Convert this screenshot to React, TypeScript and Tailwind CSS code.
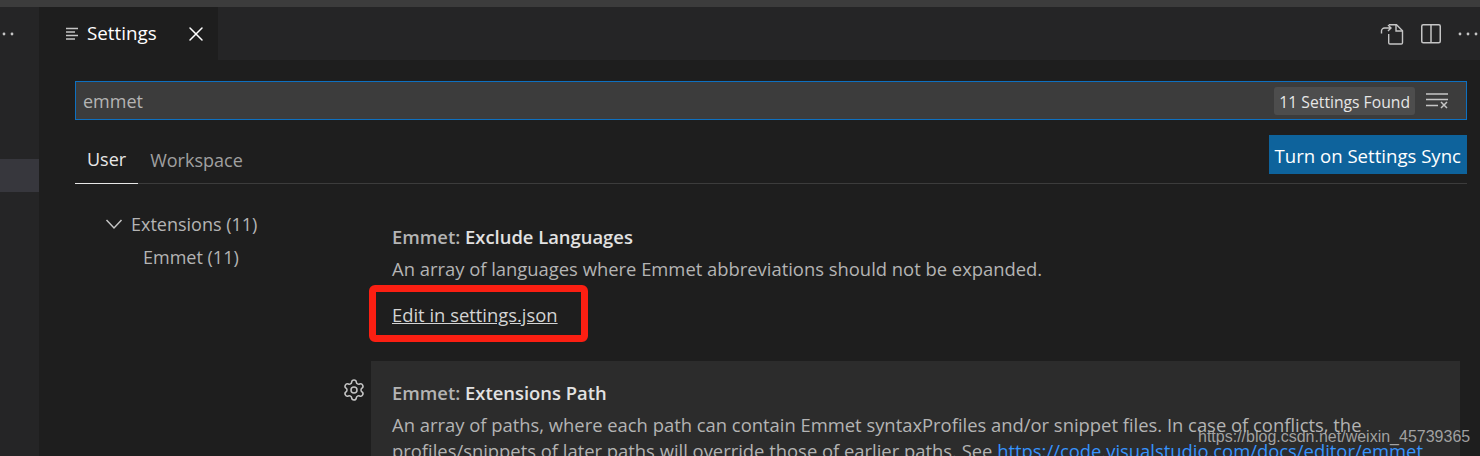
import { Settings, X } from "lucide-react";

function Dots() {
  return (
    <svg width="20" height="16" viewBox="0 0 20 16" fill="#c5c5c5">
      <circle cx="2" cy="8" r="1.4" />
      <circle cx="10" cy="8" r="1.4" />
      <circle cx="18" cy="8" r="1.4" />
    </svg>
  );
}

function PreviewIcon() {
  return (
    <svg width="24" height="24" viewBox="0 0 24 24" fill="none" stroke="#c5c5c5" strokeWidth="1.4">
      <path d="M9 2.7h7.5l6 6v12a1.3 1.3 0 0 1-1.3 1.3H10a1.3 1.3 0 0 1-1.3-1.3V12" />
      <path d="M16 2.7V9h6.5" />
      <path d="M1.5 11.5V9a3 3 0 0 1 3-3h6.5M8 3l3 3-3 3" />
    </svg>
  );
}

function SplitIcon() {
  return (
    <svg width="20" height="20" viewBox="0 0 20 20" fill="none" stroke="#c5c5c5" strokeWidth="1.5">
      <rect x="0.75" y="0.75" width="18.5" height="18" rx="1.5" />
      <path d="M10 1v18" />
    </svg>
  );
}

function ClearIcon() {
  return (
    <svg width="22" height="16" viewBox="0 0 22 16" fill="none" stroke="#c5c5c5" strokeWidth="1.5">
      <path d="M0 1h22M0 6.5h22M0 12.5h12" />
      <path d="M15 9l6 6M21 9l-6 6" />
    </svg>
  );
}

function TabListIcon() {
  return (
    <svg width="14" height="14" viewBox="0 0 14 14" fill="none" stroke="#c5c5c5" strokeWidth="1.4">
      <path d="M1 1.5h12M1 5h9M1 8.5h12M1 12h9" />
    </svg>
  );
}

function Chevron() {
  return (
    <svg width="18" height="12" viewBox="0 0 18 12" fill="none" stroke="#c5c5c5" strokeWidth="1.5">
      <path d="M1.5 2l7.5 8 7.5-8" />
    </svg>
  );
}

export default function App() {
  return (
    <div
      className="relative flex h-[456px] w-[1480px] flex-col overflow-hidden bg-[#1e1e1e] text-[#cccccc]"
      style={{ fontFamily: '"Open Sans", "Noto Sans", sans-serif' }}
    >
      {/* title bar */}
      <div className="h-[7px] shrink-0 bg-[#3c3c3c]" />

      <div className="flex min-h-0 flex-1">
        {/* side bar */}
        <div className="w-[39px] shrink-0 overflow-hidden bg-[#252526]">
          <div className="flex h-[53px] items-center">
            <div className="-ml-[6px] flex h-4 items-center">
              <Dots />
            </div>
          </div>
          <div className="mt-[99px] h-[33px] bg-[#37373d]" />
        </div>

        {/* editor */}
        <div className="flex min-w-0 flex-1 flex-col">
          <div className="flex h-[53px] shrink-0 items-center justify-between bg-[#252526]">
            <div className="flex h-full w-[179px] items-center bg-[#1e1e1e] pl-[26px] text-white">
              <TabListIcon />
              <span className="ml-2 text-[18.8px] leading-none">Settings</span>
              <X className="ml-[27px]" size={24} strokeWidth={1.5} />
            </div>
            <div className="mr-[2px] flex items-center gap-[17px]">
              <PreviewIcon />
              <SplitIcon />
              <Dots />
            </div>
          </div>

          <div className="flex min-h-0 flex-1 flex-col pl-[36px] pr-[13px] pt-[21px]">
            {/* search */}
            <div className="flex h-[39px] shrink-0 items-center justify-between border border-[#0e70c0] bg-[#3c3c3c] pl-[7px] pr-[18px]">
              <span className="pt-0.5 text-[18px] text-[#b4b4b4]">emmet</span>
              <div className="flex items-center gap-[11px]">
                <span className="rounded-[3px] bg-[#4d4d4d] px-[5px] pb-px pt-[3px] text-[15.7px] leading-[24px] text-[#e6e6e6]">
                  11 Settings Found
                </span>
                <ClearIcon />
              </div>
            </div>

            {/* scope tabs */}
            <div className="flex h-[64px] shrink-0 items-start justify-between border-b border-[#3c3c3c]">
              <div className="flex h-full items-end">
                <div className="-mb-px flex h-[64px] items-center border-b border-[#e7e7e7] px-[12px] pt-[15px] text-[18px] text-[#e7e7e7]">
                  User
                </div>
                <div className="flex h-[64px] items-center px-[12px] pt-[18px] text-[18px] text-[#a0a0a0]">
                  Workspace
                </div>
              </div>
              <div className="mt-[15px] flex h-[39px] items-center bg-[#0e639c] px-[6px] pt-0.5 text-[18.6px] whitespace-nowrap text-white">
                Turn on Settings Sync
              </div>
            </div>

            <div className="flex min-h-0 flex-1">
              {/* toc */}
              <div className="w-[296px] shrink-0 pl-[30px] pt-[27px] text-[18px] text-[#b4b4b4]">
                <div className="flex h-[26px] items-center gap-[8px]">
                  <Chevron />
                  <span>Extensions (11)</span>
                </div>
                <div className="mt-[7px] pl-[38px] leading-[26px]">Emmet (11)</div>
              </div>

              {/* settings list */}
              <div className="min-w-0 flex-1">
                <div className="pl-[21px] pt-[40px]">
                  <div className="text-[18.4px] leading-[26px] font-semibold">
                    <span className="text-[#b4b4b4]">Emmet: </span>
                    <span className="text-[#e2e2e2]">Exclude Languages</span>
                  </div>
                  <div className="mt-[6px] text-[18.4px] leading-[26px] text-[#b4b4b4]">
                    An array of languages where Emmet abbreviations should not be expanded.
                  </div>
                  <div className="mt-[20px] text-[18.4px] leading-[26px] text-[#d4d4d4] underline">
                    Edit in settings.json
                  </div>
                </div>

                <div className="relative mr-[7px] mt-[33px] h-[200px] bg-[#2c2c2c] pl-[21px] pr-[20px] pt-[19px]">
                  <Settings
                    className="absolute -left-[29px] top-[17px] text-[#c5c5c5]"
                    size={24}
                    strokeWidth={1.5}
                  />
                  <div className="text-[18.4px] leading-[26px] font-semibold">
                    <span className="text-[#b4b4b4]">Emmet: </span>
                    <span className="text-[#e2e2e2]">Extensions Path</span>
                  </div>
                  <div className="mt-[6px] text-[18.4px] leading-[26px] text-[#b4b4b4]">
                    An array of paths, where each path can contain Emmet syntaxProfiles and/or
                    snippet files. In case of conflicts, the profiles/snippets of later paths will
                    override those of earlier paths. See{" "}
                    <span className="text-[#3794ff]">https://code.visualstudio.com/docs/editor/emmet</span>
                  </div>
                </div>
              </div>
            </div>
          </div>
        </div>
      </div>

      {/* red annotation */}
      <div className="absolute left-[369px] top-[285px] h-[57px] w-[219px] rounded-[6px] border-[7px] border-[#fb1f12]" />

      {/* watermark */}
      <div
        className="absolute left-[1198px] top-[427px] text-[16px] leading-[20px] whitespace-nowrap text-[#b8b8b8]/85"
        style={{ fontFamily: '"Liberation Sans", sans-serif' }}
      >
        https://blog.csdn.net/weixin_45739365
      </div>
    </div>
  );
}
